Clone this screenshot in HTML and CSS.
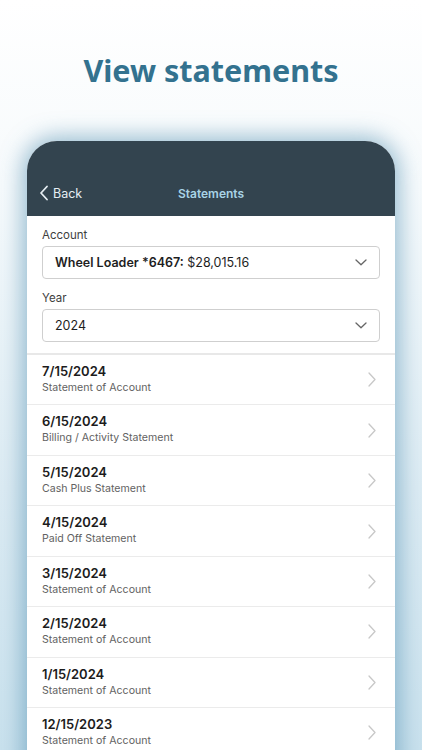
FILE: index.html
```html
<!DOCTYPE html>
<html lang="en">
<head>
    <meta charset="UTF-8">
    <meta name="viewport" content="width=device-width, initial-scale=1.0">
    <title>View statements</title>
    <link rel="stylesheet" href="styles.css">
</head>
<body>
    <h1 class="headline">View statements</h1>
    <div class="phone">
        <header class="topbar">
            <div class="nav">
                <span class="back">
                    <svg width="10" height="16" viewBox="0 0 10 16"><path d="M8 1.5 L2 8 L8 14.5" fill="none" stroke="#e6eef3" stroke-width="1.8" stroke-linecap="round" stroke-linejoin="round"/></svg>
                    Back
                </span>
                <span class="title">Statements</span>
            </div>
        </header>

        <div class="filters">
            <label class="label">Account</label>
            <div class="select">
                <span><b>Wheel Loader *6467:</b> $28,015.16</span>
                <svg width="12" height="7" viewBox="0 0 12 7"><path d="M1 1 L6 5.8 L11 1" fill="none" stroke="#666" stroke-width="1.3" stroke-linecap="round" stroke-linejoin="round"/></svg>
            </div>
            <label class="label year">Year</label>
            <div class="select">
                <span>2024</span>
                <svg width="12" height="7" viewBox="0 0 12 7"><path d="M1 1 L6 5.8 L11 1" fill="none" stroke="#666" stroke-width="1.3" stroke-linecap="round" stroke-linejoin="round"/></svg>
            </div>
        </div>

        <ul class="list">
            <li class="item"><div><div class="date">7/15/2024</div><div class="kind">Statement of Account</div></div><svg class="chev" width="8" height="15" viewBox="0 0 8 15"><path d="M1 1 L7 7.5 L1 14" fill="none" stroke="#c8c8c8" stroke-width="1.3" stroke-linecap="round" stroke-linejoin="round"/></svg></li>
            <li class="item"><div><div class="date">6/15/2024</div><div class="kind">Billing / Activity Statement</div></div><svg class="chev" width="8" height="15" viewBox="0 0 8 15"><path d="M1 1 L7 7.5 L1 14" fill="none" stroke="#c8c8c8" stroke-width="1.3" stroke-linecap="round" stroke-linejoin="round"/></svg></li>
            <li class="item"><div><div class="date">5/15/2024</div><div class="kind">Cash Plus Statement</div></div><svg class="chev" width="8" height="15" viewBox="0 0 8 15"><path d="M1 1 L7 7.5 L1 14" fill="none" stroke="#c8c8c8" stroke-width="1.3" stroke-linecap="round" stroke-linejoin="round"/></svg></li>
            <li class="item"><div><div class="date">4/15/2024</div><div class="kind">Paid Off Statement</div></div><svg class="chev" width="8" height="15" viewBox="0 0 8 15"><path d="M1 1 L7 7.5 L1 14" fill="none" stroke="#c8c8c8" stroke-width="1.3" stroke-linecap="round" stroke-linejoin="round"/></svg></li>
            <li class="item"><div><div class="date">3/15/2024</div><div class="kind">Statement of Account</div></div><svg class="chev" width="8" height="15" viewBox="0 0 8 15"><path d="M1 1 L7 7.5 L1 14" fill="none" stroke="#c8c8c8" stroke-width="1.3" stroke-linecap="round" stroke-linejoin="round"/></svg></li>
            <li class="item"><div><div class="date">2/15/2024</div><div class="kind">Statement of Account</div></div><svg class="chev" width="8" height="15" viewBox="0 0 8 15"><path d="M1 1 L7 7.5 L1 14" fill="none" stroke="#c8c8c8" stroke-width="1.3" stroke-linecap="round" stroke-linejoin="round"/></svg></li>
            <li class="item"><div><div class="date">1/15/2024</div><div class="kind">Statement of Account</div></div><svg class="chev" width="8" height="15" viewBox="0 0 8 15"><path d="M1 1 L7 7.5 L1 14" fill="none" stroke="#c8c8c8" stroke-width="1.3" stroke-linecap="round" stroke-linejoin="round"/></svg></li>
            <li class="item"><div><div class="date">12/15/2023</div><div class="kind">Statement of Account</div></div><svg class="chev" width="8" height="15" viewBox="0 0 8 15"><path d="M1 1 L7 7.5 L1 14" fill="none" stroke="#c8c8c8" stroke-width="1.3" stroke-linecap="round" stroke-linejoin="round"/></svg></li>
        </ul>
    </div>
</body>
</html>
```

FILE: styles.css
```css
html, body {
    margin: 0;
    height: 750px;
    overflow: hidden;
}
body {
    font-family: Inter, "Noto Sans", sans-serif;
    background: linear-gradient(180deg, #ffffff 0%, #f6fafc 25%, #dcebf3 65%, #c9e1ed 100%);
}
.headline {
    margin: 0;
    padding-top: 50px;
    height: 141px;
    box-sizing: border-box;
    text-align: center;
    font-family: "Noto Sans", sans-serif;
    font-size: 30.5px;
    line-height: 40px;
    font-weight: 700;
    color: #33728f;
}
.phone {
    width: 368px;
    margin: 0 auto;
    height: 640px;
    background: #fff;
    border-radius: 30px 30px 0 0;
    overflow: hidden;
    box-shadow: 0 0 22px 4px rgba(70, 135, 172, 0.55);
}
.topbar {
    height: 75px;
    box-sizing: border-box;
    padding: 40px 12px 11px;
    background: #33444f;
}
.nav {
    position: relative;
    height: 24px;
    display: flex;
    align-items: center;
}
.back {
    display: flex;
    align-items: center;
    gap: 4px;
    color: #e6eef3;
    font-size: 12.5px;
}
.title {
    position: absolute;
    left: 0;
    right: 0;
    text-align: center;
    color: #a8d3e6;
    font-size: 12px;
    font-weight: 600;
    pointer-events: none;
}
.filters {
    padding: 11px 15px 11px;
    border-bottom: 2px solid #e8e8e8;
}
.label {
    display: block;
    font-size: 11.5px;
    line-height: 16px;
    color: #3e3e3e;
    margin-bottom: 3px;
}
.label.year {
    margin-top: 11px;
}
.select {
    height: 33px;
    box-sizing: border-box;
    border: 1px solid #cfcfcf;
    border-radius: 4px;
    display: flex;
    align-items: center;
    justify-content: space-between;
    padding: 0 12px;
    font-size: 12.5px;
    color: #1e1e1e;
}
.select b {
    font-weight: 600;
}
.list {
    list-style: none;
    margin: 0;
    padding: 0;
}
.item {
    height: 50.45px;
    box-sizing: border-box;
    padding: 8px 19px 0 15px;
    border-bottom: 1px solid #ebebeb;
    display: flex;
    justify-content: space-between;
    align-items: center;
}
.item > div {
    align-self: flex-start;
}
.date {
    font-size: 13px;
    line-height: 17px;
    font-weight: 600;
    color: #1c1c1c;
}
.kind {
    font-size: 10.6px;
    line-height: 16px;
    color: #626262;
}
.chev {
    margin-top: -8px;
}
```
